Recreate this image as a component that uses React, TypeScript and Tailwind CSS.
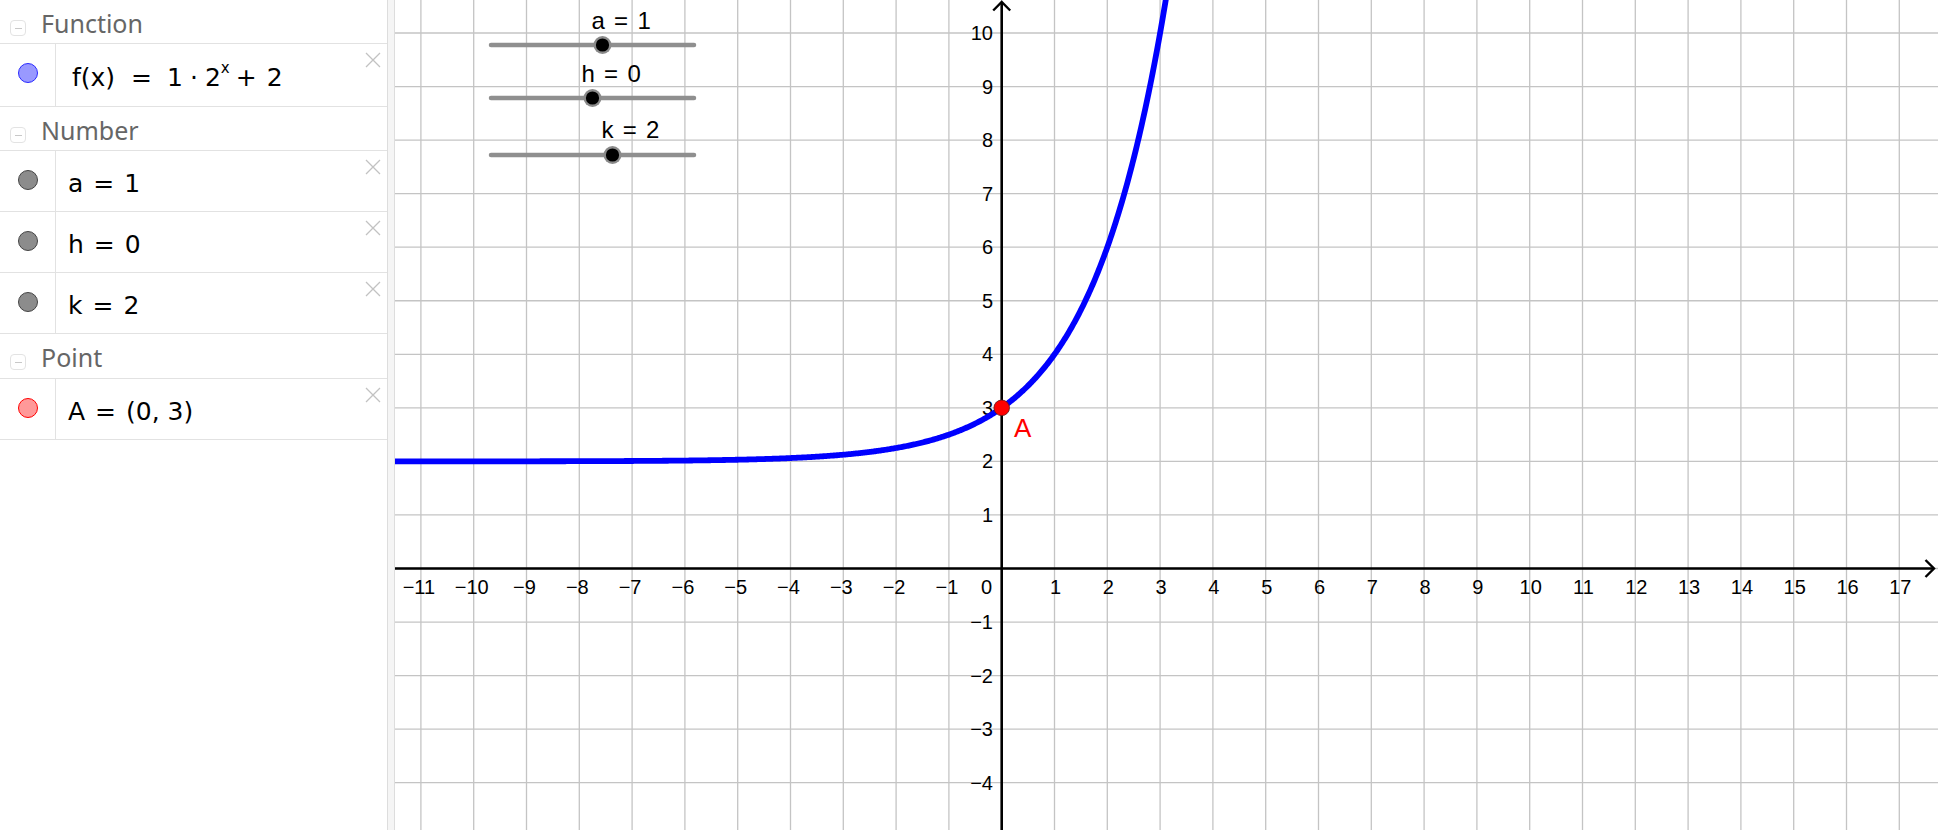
import React from "react";

const OX = 1001.7;
const OY = 568.5;
const SX = 52.8;
const SY = 53.55;
const px = (x: number) => OX + x * SX;
const py = (y: number) => OY - y * SY;

function CollapseIcon() {
  return (
    <div className="w-[16px] h-[16px] mt-[20px] rounded-[4px] border border-[#e3e3e3] flex items-center justify-center shrink-0">
      <div className="w-[7px] h-[1px] bg-[#c8c8c8]" />
    </div>
  );
}

function CloseIcon() {
  return (
    <svg width="16" height="16" viewBox="0 0 16 16" className="absolute right-[6px] top-[8px]">
      <path d="M1 1 L15 15 M15 1 L1 15" stroke="#c2c2c2" strokeWidth="1.3" fill="none" />
    </svg>
  );
}

function Header({ label, h = "h-[44px]" }: { label: string; h?: string }) {
  return (
    <div className={`${h} flex items-start gap-[15px] pl-[10px] border-b border-[#e2e2e2] shrink-0`}>
      <CollapseIcon />
      <span
        className="mt-[11px] text-[25px] text-[#666666] leading-none"
        style={{ fontFamily: '"Noto Sans", sans-serif' }}
      >
        {label}
      </span>
    </div>
  );
}

function Item({
  h,
  fill,
  stroke,
  children,
  wide = false,
}: {
  h: string;
  fill: string;
  stroke: string;
  children: React.ReactNode;
  wide?: boolean;
}) {
  return (
    <div className={`${h} flex border-b border-[#e2e2e2] relative shrink-0`}>
      <div className="w-[56px] border-r border-[#e2e2e2] flex justify-center pt-[19px] shrink-0">
        <div
          className="w-[20px] h-[20px] rounded-full border"
          style={{ backgroundColor: fill, borderColor: stroke }}
        />
      </div>
      <div
        className={`flex items-center text-[25px] text-black pt-[6px] ${wide ? "pl-[16px]" : "pl-[12px]"}`}
        style={{ fontFamily: '"DejaVu Sans", sans-serif' }}
      >
        {children}
      </div>
      <CloseIcon />
    </div>
  );
}

function Graph() {
  const vLines: number[] = [];
  for (let i = -11; i <= 17; i++) vLines.push(i);
  const hLines: number[] = [];
  for (let j = -4; j <= 10; j++) hLines.push(j);

  const pts: string[] = [];
  for (let x = -11.6; x <= 3.25; x += 0.02) {
    const y = Math.pow(2, x) + 2;
    pts.push(`${px(x).toFixed(2)},${py(y).toFixed(2)}`);
  }

  const font = '"Liberation Sans", Arial, sans-serif';

  const slider = (knobVal: number, lineY: number, label: string, baseY: number) => {
    const kx = 592.5 + knobVal * 10;
    return (
      <g key={label}>
        <line x1={491} y1={lineY} x2={694} y2={lineY} stroke="#8f8f8f" strokeWidth={4.5} strokeLinecap="round" />
        <circle cx={kx} cy={lineY} r={9} fill="#8a8a8a" />
        <circle cx={kx} cy={lineY} r={6.6} fill="#000" />
        <text x={kx - 11} y={baseY} fontSize={24} letterSpacing={1.3} fill="#000" style={{ fontFamily: font }}>
          {label}
        </text>
      </g>
    );
  };

  const minus = "\u2212";

  return (
    <svg width={1543} height={830} viewBox="395 0 1543 830" className="block">
      <rect x={395} y={0} width={1543} height={830} fill="#fff" />
      {vLines.map((i) => (
        <line key={`v${i}`} x1={px(i)} y1={0} x2={px(i)} y2={830} stroke="#c4c4c4" strokeWidth={1.3} />
      ))}
      {hLines.map((j) => (
        <line key={`h${j}`} x1={395} y1={py(j)} x2={1938} y2={py(j)} stroke="#c4c4c4" strokeWidth={1.3} />
      ))}
      {/* axes */}
      <line x1={395} y1={OY} x2={1934} y2={OY} stroke="#000" strokeWidth={2.6} />
      <line x1={OX} y1={2} x2={OX} y2={830} stroke="#000" strokeWidth={2.6} />
      <path d={`M${OX - 8.5} 10.5 L${OX} 2 L${OX + 8.5} 10.5`} stroke="#000" strokeWidth={2.4} fill="none" />
      <path d={`M1925.5 ${OY - 8.5} L1934 ${OY} L1925.5 ${OY + 8.5}`} stroke="#000" strokeWidth={2.4} fill="none" />
      {/* labels */}
      <g fontSize={20} fill="#000" style={{ fontFamily: font }}>
        {vLines
          .filter((i) => i !== 0)
          .map((i) => (
            <text key={`xl${i}`} x={px(i) + (i < 0 ? -2 : 1)} y={594} textAnchor="middle">
              {i < 0 ? `${minus}${-i}` : `${i}`}
            </text>
          ))}
        <text x={992} y={594} textAnchor="end">
          0
        </text>
        {hLines
          .filter((j) => j !== 0)
          .map((j) => (
            <text key={`yl${j}`} x={993} y={py(j) + 7} textAnchor="end">
              {j < 0 ? `${minus}${-j}` : `${j}`}
            </text>
          ))}
      </g>
      {/* curve */}
      <polyline
        points={pts.join(" ")}
        fill="none"
        stroke="#0000ff"
        strokeWidth={5.8}
        strokeLinejoin="round"
        strokeLinecap="round"
      />
      {/* point A */}
      <circle cx={OX} cy={py(3)} r={7.8} fill="#ff0000" stroke="#5a1a1a" strokeWidth={0.8} />
      <text x={1014} y={437} fontSize={26} fill="#ff0000" style={{ fontFamily: font }}>
        A
      </text>
      {/* sliders */}
      {slider(1, 45, "a = 1", 29)}
      {slider(0, 98, "h = 0", 82)}
      {slider(2, 155, "k = 2", 138)}
    </svg>
  );
}

export default function App() {
  return (
    <div className="w-[1938px] h-[830px] flex overflow-hidden bg-white">
      <div className="w-[387px] h-full flex flex-col shrink-0 bg-white">
        <Header label="Function" />
        <Item h="h-[63px]" fill="#9999ff" stroke="#2a2aff" wide>
          <span>f(x)</span>
          <span className="ml-[16px]">=</span>
          <span className="ml-[15px]">1</span>
          <span className="ml-[7px]">·</span>
          <span className="ml-[7px]">2</span>
          <span className="text-[15px] relative -top-[10px]">x</span>
          <span className="ml-[6px]">+</span>
          <span className="ml-[10px]">2</span>
        </Item>
        <Header label="Number" />
        <Item h="h-[61px]" fill="#8c8c8c" stroke="#444444">
          <span>a</span>
          <span className="ml-[10px]">=</span>
          <span className="ml-[10px]">1</span>
        </Item>
        <Item h="h-[61px]" fill="#8c8c8c" stroke="#444444">
          <span>h</span>
          <span className="ml-[10px]">=</span>
          <span className="ml-[10px]">0</span>
        </Item>
        <Item h="h-[61px]" fill="#8c8c8c" stroke="#444444">
          <span>k</span>
          <span className="ml-[10px]">=</span>
          <span className="ml-[10px]">2</span>
        </Item>
        <Header label="Point" h="h-[45px]" />
        <Item h="h-[61px]" fill="#ff9999" stroke="#ff0000">
          <span>A</span>
          <span className="ml-[10px]">=</span>
          <span className="ml-[10px]">(0, 3)</span>
        </Item>
      </div>
      <div className="w-[8px] h-full bg-[#f5f5f5] border-l border-r border-[#dddddd] shrink-0" />
      <Graph />
    </div>
  );
}
